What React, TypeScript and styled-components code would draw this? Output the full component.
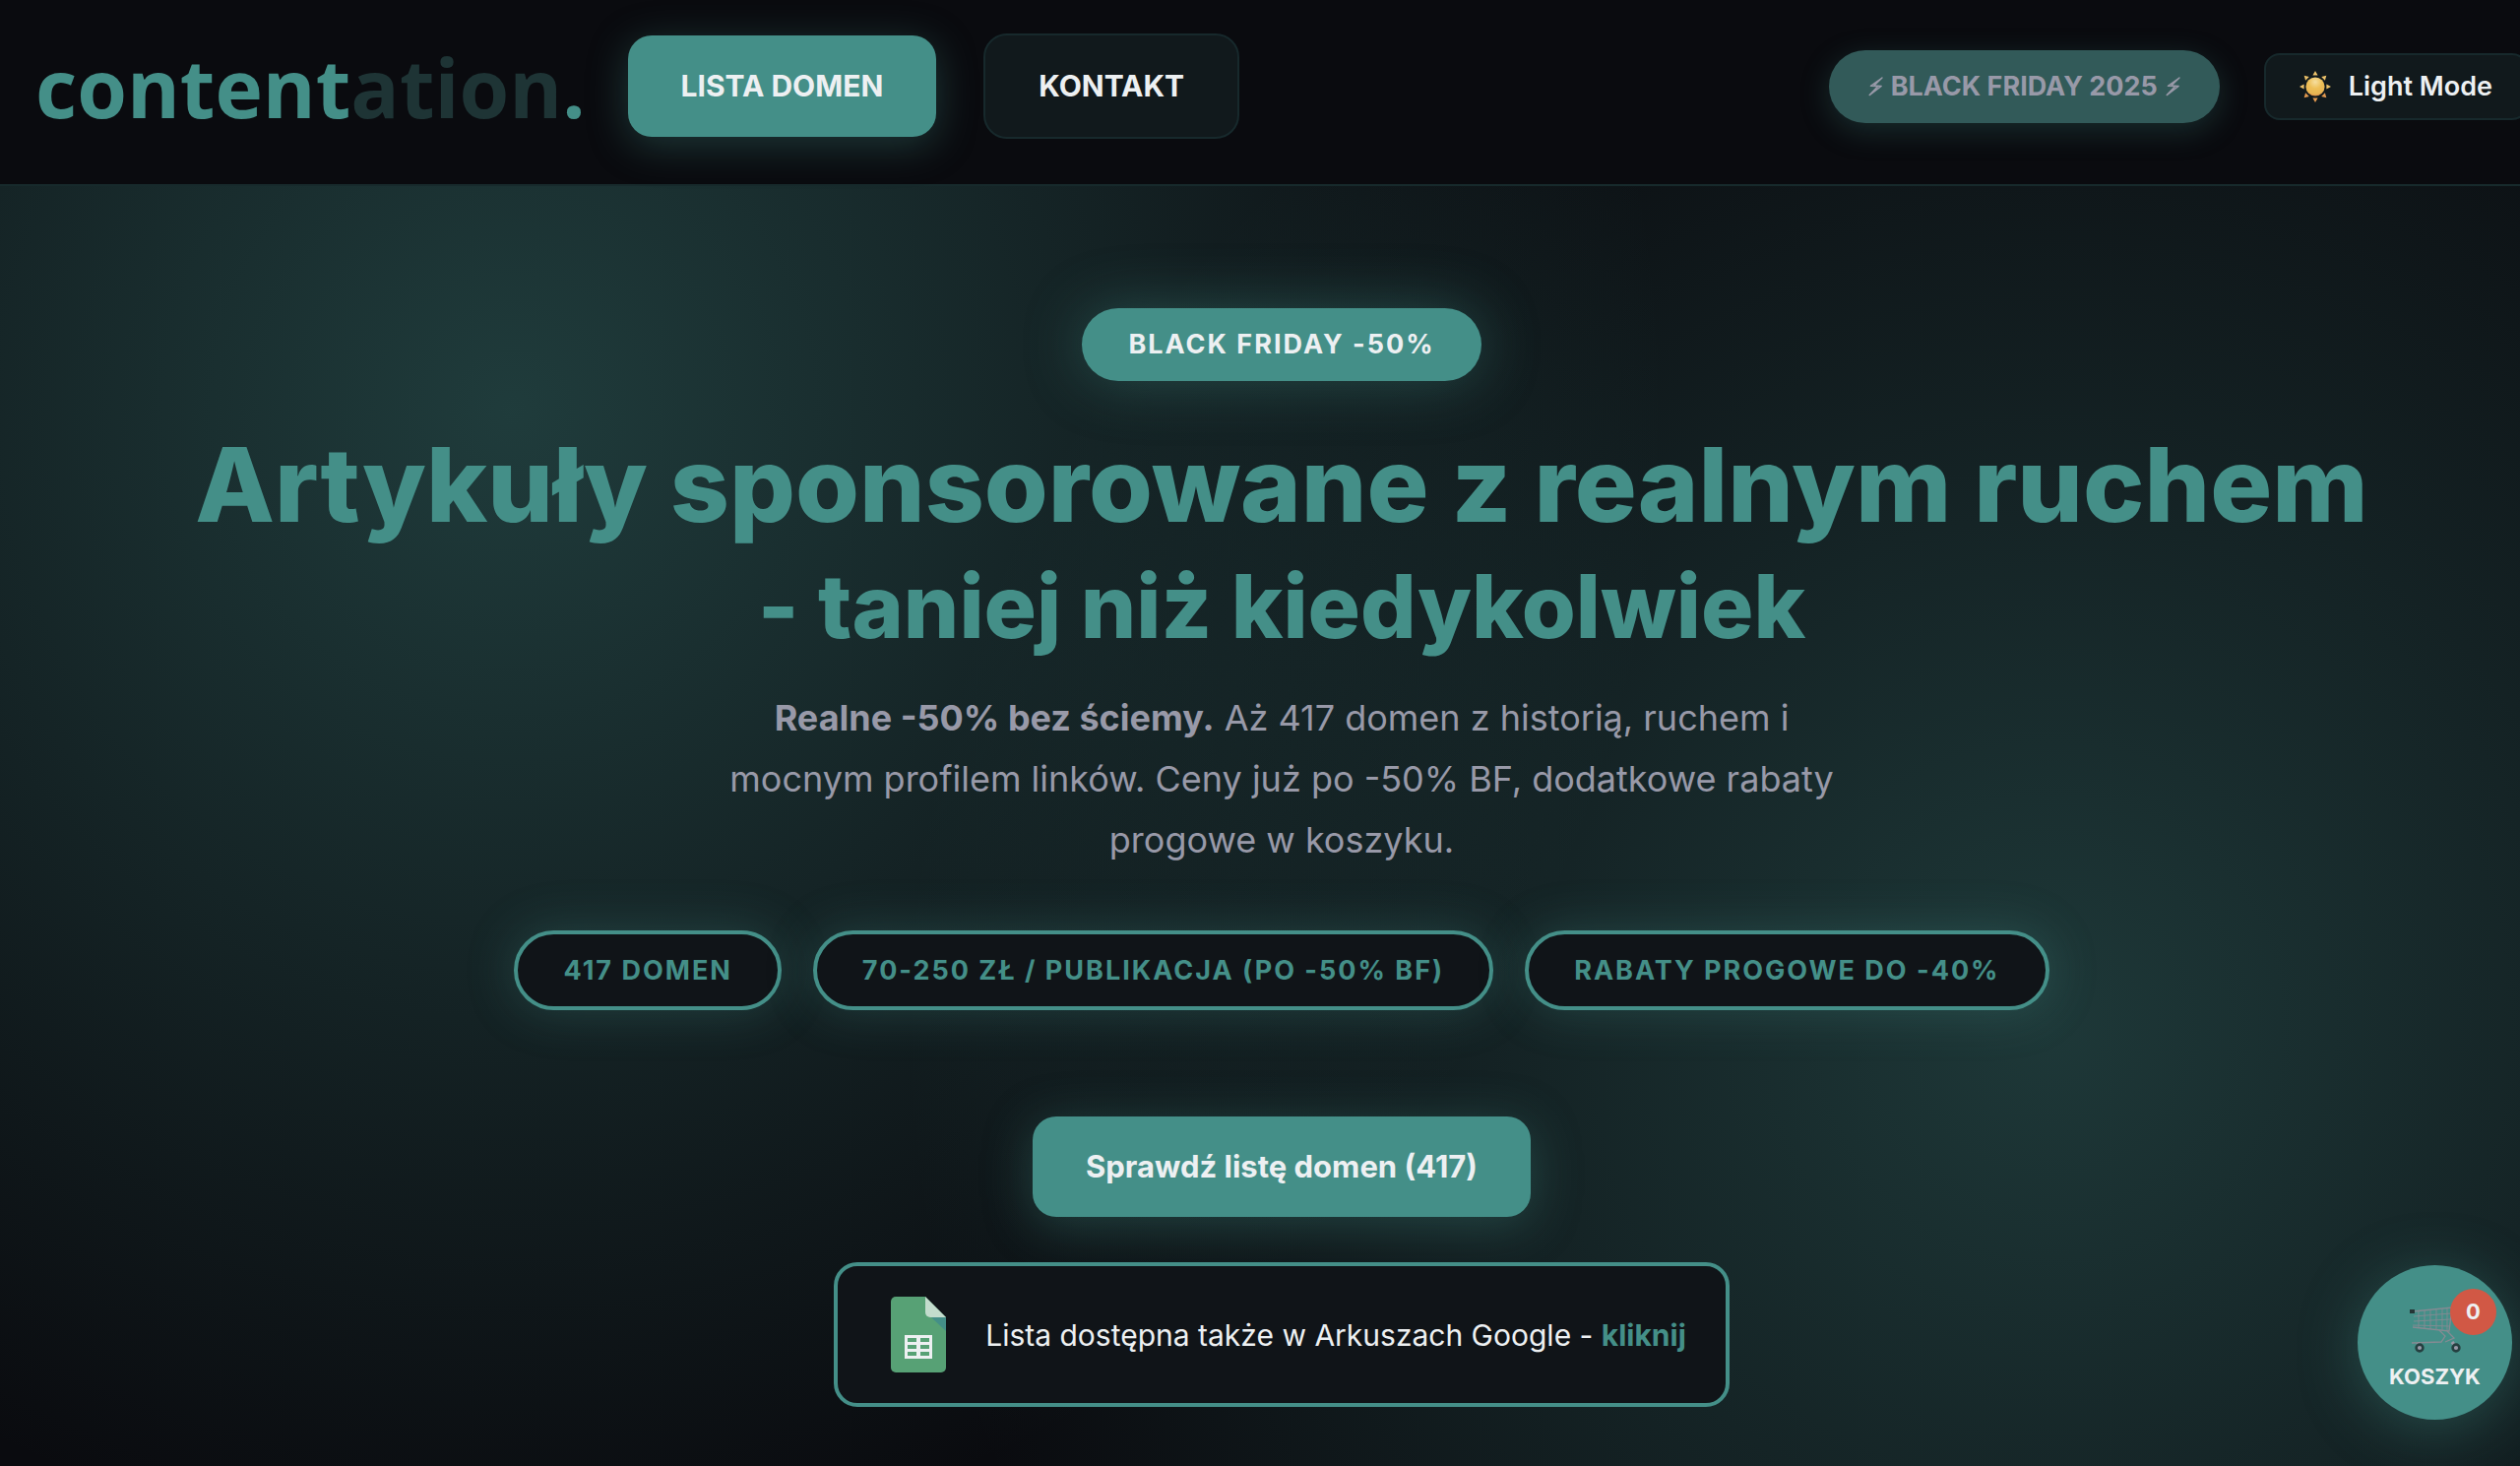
import React from "react";
import styled, { createGlobalStyle, css } from "styled-components";

const teal = "#448f88";
const ink = "#edf0f2";
const night = "#0a0b0f";
const muted = "#9899a8";

const GlobalStyle = createGlobalStyle`
  *, *::before, *::after { box-sizing: border-box; }
  html { background: ${night}; }
  body {
    margin: 0;
    overflow: hidden;
    color: ${ink};
    font-family: Inter, "Liberation Sans", sans-serif;
    -webkit-font-smoothing: antialiased;
  }
  button { font-family: inherit; cursor: pointer; }
  a { text-decoration: none; }
`;

const Page = styled.div`
  position: relative;
  display: flex;
  flex-direction: column;
  width: calc(100% + 44px);
  min-height: 100vh;
  background:
    radial-gradient(circle at 20% 28%, rgba(68, 143, 136, 0.37) 0%, transparent 50%),
    radial-gradient(circle at 80% 70%, rgba(68, 143, 136, 0.34) 0%, transparent 50%),
    ${night};
`;

const Header = styled.header`
  display: flex;
  align-items: center;
  justify-content: space-between;
  padding: 34px 36px 46px;
  background: ${night};
  border-bottom: 2px solid #172a2c;
`;

const HeaderGroup = styled.div<{ $gap: number }>`
  display: flex;
  align-items: center;
  gap: ${(p) => p.$gap}px;
`;

const Nav = styled.nav`
  display: flex;
  align-items: center;
  gap: 48px;
`;

const Logo = styled.a`
  color: ${teal};
  font: 700 82px/106px "Open Sans", "Noto Sans", sans-serif;
`;

const LogoTail = styled.span`
  color: #1e3435;
`;

const NavLink = styled.a<{ $active?: boolean }>`
  padding: 33px 54px;
  border-radius: 24px;
  color: ${ink};
  font-size: 30px;
  font-weight: 700;
  line-height: 37px;
  white-space: nowrap;
  ${(p) =>
    p.$active
      ? css`
          background: ${teal};
          box-shadow: 0 8px 40px rgba(68, 143, 136, 0.35);
        `
      : css`
          background: #11191c;
          border: 2px solid #17292c;
        `}
`;

const EventPill = styled.button`
  display: flex;
  align-items: center;
  gap: 8px;
  padding: 20px 40px;
  border: 0;
  border-radius: 38px;
  background: #325a59;
  box-shadow: 0 8px 30px rgba(68, 143, 136, 0.25);
  color: ${muted};
  font-size: 27px;
  font-weight: 700;
  line-height: 34px;
  white-space: nowrap;
`;

const ThemeToggle = styled.button`
  display: flex;
  align-items: center;
  gap: 18px;
  padding: 15px 34px;
  border: 2px solid #17292c;
  border-radius: 16px;
  background: #11191c;
  color: ${ink};
  font-size: 27px;
  font-weight: 600;
  line-height: 34px;
  white-space: nowrap;
`;

const Hero = styled.main`
  display: flex;
  flex-direction: column;
  align-items: center;
  padding: 124px 48px 60px;
  text-align: center;
`;

const Badge = styled.span`
  padding: 20px 47px;
  border-radius: 38px;
  background: ${teal};
  box-shadow: 0 0 60px rgba(68, 143, 136, 0.4);
  font-size: 27px;
  font-weight: 700;
  letter-spacing: 2px;
  line-height: 34px;
`;

const Title = styled.h1`
  margin: 43px 0 20px;
  color: ${teal};
  font-size: 105px;
  font-weight: 800;
  line-height: 124px;
`;

const TitleTail = styled.span`
  display: block;
  font-size: 89px;
`;

const Lead = styled.p`
  max-width: 1160px;
  margin: 0;
  color: ${muted};
  font-size: 36px;
  line-height: 62px;
`;

const Chips = styled.ul`
  display: flex;
  flex-wrap: wrap;
  justify-content: center;
  gap: 32px;
  margin: 61px 0 108px;
  padding: 0;
  list-style: none;
`;

const Chip = styled.li`
  padding: 20px 46px;
  border: 4px solid ${teal};
  border-radius: 42px;
  background: #101418;
  box-shadow: 0 0 50px rgba(68, 143, 136, 0.3);
  color: ${teal};
  font-size: 27px;
  font-weight: 700;
  letter-spacing: 2px;
  line-height: 33px;
`;

const Cta = styled.a`
  padding: 32px 54px;
  border-radius: 24px;
  background: ${teal};
  box-shadow: 0 8px 50px rgba(68, 143, 136, 0.35);
  color: ${ink};
  font-size: 31px;
  font-weight: 700;
  line-height: 38px;
`;

const SheetBox = styled.div`
  display: flex;
  align-items: center;
  gap: 32px;
  margin-top: 46px;
  padding: 31px 40px 31px 46px;
  border: 4px solid ${teal};
  border-radius: 24px;
  background: #101418;
  font-size: 30px;
  line-height: 48px;
`;

const SheetLink = styled.a`
  color: ${teal};
  font-weight: 700;
`;

const CartButton = styled.button`
  position: absolute;
  right: 52px;
  bottom: 47px;
  display: flex;
  flex-direction: column;
  align-items: center;
  justify-content: center;
  gap: 10px;
  width: 157px;
  height: 157px;
  padding: 10px 0 0;
  border: 0;
  border-radius: 50%;
  background: ${teal};
  box-shadow: 0 8px 60px rgba(68, 143, 136, 0.4);
  color: ${ink};
  font-size: 22px;
  font-weight: 700;
  line-height: 26px;
`;

const CartCount = styled.span`
  position: absolute;
  top: 24px;
  right: 16px;
  width: 47px;
  height: 47px;
  border-radius: 50%;
  background: #d15845;
  line-height: 47px;
`;

const Bolt = () => (
  <svg width="15" height="20" viewBox="0 0 15 20" fill="none" stroke={muted} strokeWidth="1.4" strokeLinejoin="round" aria-hidden="true">
    <path d="M14 1 2.4 9.4l7.4.2L1.2 18.6l12-9.2-7.4-.4z" fill={muted} fillOpacity=".2" />
  </svg>
);

const Sun = () => (
  <svg width="32" height="32" viewBox="-16 -16 32 32" aria-hidden="true">
    <defs>
      <radialGradient id="sunDisc" cx="50%" cy="25%" r="80%">
        <stop offset="0" stopColor="#f6dfa0" />
        <stop offset=".45" stopColor="#edbf57" />
        <stop offset=".8" stopColor="#e9b552" />
        <stop offset="1" stopColor="#d9743f" />
      </radialGradient>
    </defs>
    {[0, 45, 90, 135, 180, 225, 270, 315].map((a) => (
      <path key={a} d="M-2.6-11.4 0-16 2.6-11.4z" fill={a > 90 && a < 270 ? "#e59a50" : "#edc26a"} transform={`rotate(${a})`} />
    ))}
    <circle r="9.6" fill="url(#sunDisc)" />
  </svg>
);

const SheetIcon = () => (
  <svg width="72" height="77" viewBox="0 0 72 77" aria-hidden="true">
    <path d="M13 0h30l21 21v51a5 5 0 0 1-5 5H13a5 5 0 0 1-5-5V5a5 5 0 0 1 5-5z" fill="#57a175" />
    <path d="M49 21h15v14z" fill={teal} />
    <path d="M43 0l21 21H48a5 5 0 0 1-5-5z" fill="#c3dccd" />
    <path
      fillRule="evenodd"
      fill={ink}
      d="M22 39h28v24H22zM25 42v4h9v-4zM38 42v4h9v-4zM25 49v4h9v-4zM38 49v4h9v-4zM25 56v4h9v-4zM38 56v4h9v-4z"
    />
  </svg>
);

const CartIcon = () => (
  <svg width="54" height="48" viewBox="0 0 54 48" fill="none" stroke="#858b93" strokeWidth="1.3" aria-hidden="true">
    <path d="M4 5 44 1 41 25 4 21" />
    <path d="M5 10 43 7M5 15 42 13M4 19 42 20M10 4v18M16 4v19M22 3v20M28 3v21M34 2v22M39 2v22" strokeWidth=".9" />
    <path d="M31 24l6 6-4 6L3 37M39 25l7 7-9 4" />
    <path d="M9 37l2 4M44 36l3 4" strokeWidth="3.4" stroke="#9899a8" />
    <rect x="1" y="3" width="5" height="4" fill="#253536" stroke="none" />
    <circle cx="11" cy="42" r="3.4" stroke="#253f40" strokeWidth="2.6" fill={muted} />
    <circle cx="48" cy="42" r="3.4" stroke="#253f40" strokeWidth="2.6" fill={muted} />
  </svg>
);

const chips = ["417 DOMEN", "70-250 ZŁ / PUBLIKACJA (PO -50% BF)", "RABATY PROGOWE DO -40%"];

export default function App() {
  return (
    <>
      <GlobalStyle />
      <Page>
        <Header>
          <HeaderGroup $gap={43}>
            <Logo href="#">
              content<LogoTail>ation</LogoTail>.
            </Logo>
            <Nav>
              <NavLink href="#lista" $active>
                LISTA DOMEN
              </NavLink>
              <NavLink href="#kontakt">KONTAKT</NavLink>
            </Nav>
          </HeaderGroup>
          <HeaderGroup $gap={45}>
            <EventPill type="button">
              <Bolt />
              BLACK FRIDAY 2025
              <Bolt />
            </EventPill>
            <ThemeToggle type="button">
              <Sun />
              Light Mode
            </ThemeToggle>
          </HeaderGroup>
        </Header>
        <Hero>
          <Badge>BLACK FRIDAY -50%</Badge>
          <Title>
            Artykuły sponsorowane z realnym ruchem
            <TitleTail>- taniej niż kiedykolwiek</TitleTail>
          </Title>
          <Lead>
            <strong>Realne -50% bez ściemy.</strong> Aż 417 domen z historią, ruchem i mocnym profilem linków. Ceny już po
            -50% BF, dodatkowe rabaty progowe w koszyku.
          </Lead>
          <Chips>
            {chips.map((c) => (
              <Chip key={c}>{c}</Chip>
            ))}
          </Chips>
          <Cta href="#lista">Sprawdź listę domen (417)</Cta>
          <SheetBox>
            <SheetIcon />
            <span>
              Lista dostępna także w Arkuszach Google - <SheetLink href="#arkusz">kliknij</SheetLink>
            </span>
          </SheetBox>
        </Hero>
        <CartButton type="button">
          <CartIcon />
          KOSZYK
          <CartCount>0</CartCount>
        </CartButton>
      </Page>
    </>
  );
}
